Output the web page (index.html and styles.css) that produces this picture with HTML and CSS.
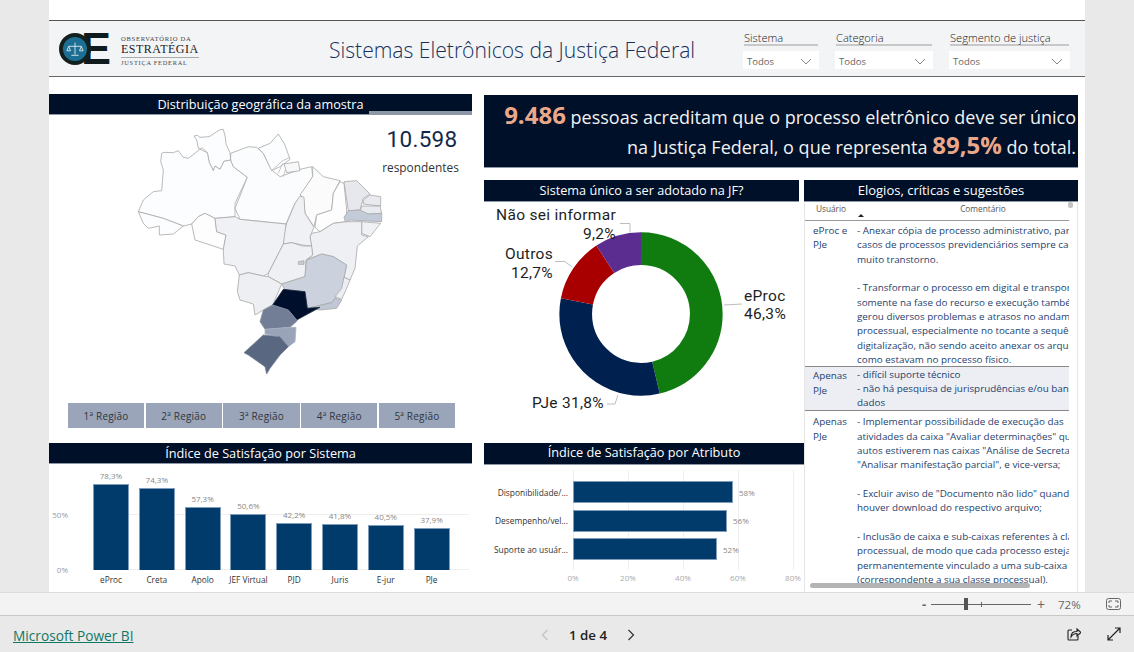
FILE: index.html
```html
<!DOCTYPE html>
<html lang="pt-BR">
<head>
<meta charset="utf-8">
<title>Sistemas Eletrônicos da Justiça Federal</title>
<link rel="stylesheet" href="styles.css">
</head>
<body>
<div class="page">
  <main class="stage">
    <div class="canvas">
      <header class="band">
        <div class="logo">
          <div class="logo-mark">
            <span class="logo-o">
              <svg class="logo-scale" viewBox="0 0 20 20"><path d="M10 3v13M6 17h8M3 7h14M3 7l-2 5h4zM17 7l-2 5h4z" fill="none" stroke="#dfeaf0" stroke-width="1"/></svg>
            </span>
            <span class="logo-e">E</span>
          </div>
          <div class="logo-text">
            <span class="logo-top">OBSERVATÓRIO DA</span>
            <span class="logo-main">ESTRATÉGIA</span>
            <span class="logo-sub">JUSTIÇA FEDERAL</span>
          </div>
        </div>
        <h1 class="report-title">Sistemas Eletrônicos da Justiça Federal</h1>
        <div class="slicers">
          <div class="slicer s1">
            <div class="slicer-label">Sistema</div>
            <div class="slicer-box"><span>Todos</span><svg class="chev" viewBox="0 0 12 7"><path d="M1 1l5 5 5-5" fill="none" stroke="#888" stroke-width="1"/></svg></div>
          </div>
          <div class="slicer s2">
            <div class="slicer-label">Categoria</div>
            <div class="slicer-box"><span>Todos</span><svg class="chev" viewBox="0 0 12 7"><path d="M1 1l5 5 5-5" fill="none" stroke="#888" stroke-width="1"/></svg></div>
          </div>
          <div class="slicer s3">
            <div class="slicer-label">Segmento de justiça</div>
            <div class="slicer-box"><span>Todos</span><svg class="chev" viewBox="0 0 12 7"><path d="M1 1l5 5 5-5" fill="none" stroke="#888" stroke-width="1"/></svg></div>
          </div>
        </div>
      </header>

      <div class="board">
        <section class="col-left">
          <h2 class="bar-title geo">Distribuição geográfica da amostra</h2>
          <div class="geo-body">
            <div class="geo-top">
              <svg class="map" viewBox="0 0 780 810">
                <g stroke="#a8a8a8" stroke-width="2.400" stroke-linejoin="round">
                  <path fill="#fcfdfe" d="M222 48L232 46L240 52L268 50L298 30L310 28L316 52L318 72L330 98L332 120L312 124L300 148L285 138L280 152L268 128L262 98L248 85L235 85L230 60Z"/>
                  <path fill="#fcfdfe" d="M125 100L132 97L160 98L175 92L190 112L205 115L240 88L262 98L268 128L280 152L285 138L300 148L312 124L332 120L340 140L382 172L345 250L345 290L285 295L255 280L235 290L215 312L190 318L130 295L55 275L70 240L100 215L125 212L130 150L122 125Z"/>
                  <path fill="#fcfdfe" d="M55 275L130 295L190 318L160 342L118 345L118 318L85 325L70 310Z"/>
                  <path fill="#fdfdfd" d="M215 312L235 290L255 280L285 295L290 335L318 345L310 388L280 378L225 360Z"/>
                  <path fill="#fbfcfd" d="M332 100L385 80L410 82L430 100L455 150L480 170L540 148L575 140L578 170L545 225L525 250L498 312L360 298L345 265L382 172L340 140L332 120Z"/>
                  <path fill="#fcfdfe" d="M415 85L450 70L475 42L495 75L510 118L480 140L455 152L430 100Z"/>
                  <path fill="#f7f8fa" d="M492 132L535 125L540 152L500 158Z"/>
                  <path fill="none" stroke="#b8b8b8" d="M455 152L488 122L510 112M475 160L488 130M490 170L496 150"/>
                  <path fill="#fbfbfc" d="M578 140L610 170L660 182L640 220L635 270L590 285L582 320L555 280L550 232L540 225L578 170Z"/>
                  <path fill="#fdfdfd" d="M660 185L672 190L680 270L680 305L640 310L600 335L585 322L590 285L635 270L640 220Z"/>
                  <path fill="#e6e8ee" d="M672 185L710 182L750 222L730 235L720 270L685 272Z"/>
                  <path fill="#e8eaef" d="M750 225L782 230L782 258L730 252L730 240Z"/>
                  <path fill="#e8ebf0" d="M725 258L780 258L785 280L745 282L720 275Z"/>
                  <path fill="#c3cbd9" d="M685 272L720 270L745 282L785 280L785 305L720 302L690 300L678 310L672 292Z"/>
                  <path fill="#f0f1f5" d="M725 305L782 310L750 350L725 340Z"/>
                  <path fill="#eff0f4" d="M575 340L600 335L640 310L680 305L725 305L725 345L745 350L712 378L705 445L690 480L672 472L680 435L640 410L605 402L560 420L578 405L570 350Z"/>
                  <path fill="#f0f1f5" d="M540 228L552 232L555 280L582 322L570 350L575 378L548 375L515 368L490 372L492 340L500 310L525 250Z"/>
                  <path fill="#f0f1f5" d="M285 295L345 290L360 298L498 312L490 372L445 460L430 468L385 458L358 465L345 438L312 432L310 388L318 345L290 335Z"/>
                  <path fill="#eff0f4" d="M490 372L515 368L548 378L575 378L578 405L558 420L555 470L485 492L445 470L445 460Z"/>
                  <path fill="#c6cdda" d="M535 425L552 422L552 433L535 433Z"/>
                  <path fill="#eeeff3" d="M358 465L385 458L430 468L445 470L485 492L458 555L430 570L405 585L400 552L360 540L352 515Z"/>
                  <path fill="#cbd1dd" d="M485 492L555 470L560 420L605 402L640 410L680 435L672 472L665 520L645 535L635 548L562 565L555 515L495 510Z"/>
                  <path fill="#eceef3" d="M672 472L690 480L680 505L665 538L645 530L665 505Z"/>
                  <path fill="#c0c8d6" d="M562 565L635 548L645 535L665 540L650 565L600 570Z"/>
                  <path fill="#000f2b" stroke="#1a2840" d="M458 555L490 508L555 515L562 565L600 562L530 600L505 570Z"/>
                  <path fill="#727e96" stroke="#8a93a6" d="M430 570L458 555L505 570L532 602L510 622L435 628L420 605Z"/>
                  <path fill="#9aa4b9" stroke="#a9b1c2" d="M435 628L510 622L528 622L525 665L505 680L480 650L435 642Z"/>
                  <path fill="#5a6780" stroke="#77829a" d="M372 698L430 645L480 650L505 680L480 705L450 745L440 762L435 740L385 705Z"/>
                </g>
              </svg>
              <div class="kpi">
                <div class="kpi-value">10.598</div>
                <div class="kpi-label">respondentes</div>
              </div>
            </div>
            <div class="regions">
              <button class="region">1ª Região</button>
              <button class="region">2ª Região</button>
              <button class="region">3ª Região</button>
              <button class="region">4ª Região</button>
              <button class="region">5ª Região</button>
            </div>
          </div>
          <h2 class="bar-title din">Índice de Satisfação por Sistema</h2>
          <div class="columns-chart">
            <div class="y-axis"><span>50%</span><span>0%</span></div>
            <div class="plot">
              <div class="col"><span class="val">78,3%</span><i class="bar" style="height:86px"></i><span class="cat">eProc</span></div>
              <div class="col"><span class="val">74,3%</span><i class="bar" style="height:82px"></i><span class="cat">Creta</span></div>
              <div class="col"><span class="val">57,3%</span><i class="bar" style="height:63px"></i><span class="cat">Apolo</span></div>
              <div class="col"><span class="val">50,6%</span><i class="bar" style="height:56px"></i><span class="cat">JEF Virtual</span></div>
              <div class="col"><span class="val">42,2%</span><i class="bar" style="height:47px"></i><span class="cat">PJD</span></div>
              <div class="col"><span class="val">41,8%</span><i class="bar" style="height:46px"></i><span class="cat">Juris</span></div>
              <div class="col"><span class="val">40,5%</span><i class="bar" style="height:45px"></i><span class="cat">E-jur</span></div>
              <div class="col"><span class="val">37,9%</span><i class="bar" style="height:42px"></i><span class="cat">PJe</span></div>
            </div>
          </div>
        </section>

        <section class="col-right">
          <div class="banner">
            <p class="banner-line"><b>9.486</b> pessoas acreditam que o processo eletrônico deve ser único</p>
            <p class="banner-line">na Justiça Federal, o que representa <b>89,5%</b> do total.</p>
          </div>
          <div class="lower">
            <div class="col-mid">
              <h2 class="bar-title din small">Sistema único a ser adotado na JF?</h2>
              <svg class="donut" viewBox="0 0 320 238">
                <g fill="none" stroke-width="32.7" transform="rotate(-90 157 112)">
                  <circle cx="157" cy="112" r="65.3" stroke="#107c10" pathLength="100" stroke-dasharray="46.3 100"/>
                  <circle cx="157" cy="112" r="65.3" stroke="#002050" pathLength="100" stroke-dasharray="31.8 100" stroke-dashoffset="-46.3"/>
                  <circle cx="157" cy="112" r="65.3" stroke="#a80000" pathLength="100" stroke-dasharray="12.7 100" stroke-dashoffset="-78.1"/>
                  <circle cx="157" cy="112" r="65.3" stroke="#5c2d91" pathLength="100" stroke-dasharray="9.2 100" stroke-dashoffset="-90.8"/>
                </g>
                <g fill="none" stroke="#bdbdbd" stroke-width="1">
                  <path d="M146 30.5v-9h-10"/>
                  <path d="M88 65l-7-5.500h-10"/>
                  <path d="M240 103l18-1"/>
                  <path d="M134 193l-3 9h-8"/>
                </g>
                <g class="donut-labels">
                  <text x="132" y="18" text-anchor="end">Não sei informar</text>
                  <text x="132" y="37" text-anchor="end">9,2%</text>
                  <text x="69" y="57" text-anchor="end">Outros</text>
                  <text x="69" y="76" text-anchor="end">12,7%</text>
                  <text x="260" y="99">eProc</text>
                  <text x="260" y="117">46,3%</text>
                  <text x="120" y="206" text-anchor="end">PJe 31,8%</text>
                </g>
              </svg>
              <h2 class="bar-title din attr">Índice de Satisfação por Atributo</h2>
              <div class="hbar-chart">
                <div class="hrow"><span class="hcat">Disponibilidade/...</span><i class="hbar" style="width:160px"></i><span class="hval">58%</span></div>
                <div class="hrow"><span class="hcat">Desempenho/vel...</span><i class="hbar" style="width:154px"></i><span class="hval">56%</span></div>
                <div class="hrow"><span class="hcat">Suporte ao usuár...</span><i class="hbar" style="width:144px"></i><span class="hval">52%</span></div>
                <div class="x-axis"><span>0%</span><span>20%</span><span>40%</span><span>60%</span><span>80%</span></div>
              </div>
            </div>
            <div class="col-table">
              <h2 class="bar-title elogios">Elogios, críticas e sugestões</h2>
              <div class="table">
                <div class="thead">
                  <div class="th user">Usuário</div>
                  <div class="th comment">Comentário<span class="sort"></span></div>
                </div>
                <div class="tr">
                  <div class="td user">eProc e PJe</div>
                  <div class="td comment">
                    <p>- Anexar cópia de processo administrativo, para</p>
                    <p>casos de processos previdenciários sempre causa</p>
                    <p>muito transtorno.</p>
                    <p>&nbsp;</p>
                    <p>- Transformar o processo em digital e transportar</p>
                    <p>somente na fase do recurso e execução também</p>
                    <p>gerou diversos problemas e atrasos no andamento</p>
                    <p>processual, especialmente no tocante a sequência</p>
                    <p>digitalização, não sendo aceito anexar os arquivos</p>
                    <p>como estavam no processo físico.</p>
                  </div>
                </div>
                <div class="tr alt">
                  <div class="td user">Apenas PJe</div>
                  <div class="td comment">
                    <p>- difícil suporte técnico</p>
                    <p>- não há pesquisa de jurisprudências e/ou banco</p>
                    <p>dados</p>
                  </div>
                </div>
                <div class="tr open">
                  <div class="td user">Apenas PJe</div>
                  <div class="td comment">
                    <p>- Implementar possibilidade de execução das</p>
                    <p>atividades da caixa "Avaliar determinações" quando</p>
                    <p>autos estiverem nas caixas "Análise de Secretaria"</p>
                    <p>"Analisar manifestação parcial", e vice-versa;</p>
                    <p>&nbsp;</p>
                    <p>- Excluir aviso de "Documento não lido" quando</p>
                    <p>houver download do respectivo arquivo;</p>
                    <p>&nbsp;</p>
                    <p>- Inclusão de caixa e sub-caixas referentes à classe</p>
                    <p>processual, de modo que cada processo esteja</p>
                    <p>permanentemente vinculado a uma sub-caixa</p>
                    <p>(correspondente a sua classe processual).</p>
                  </div>
                </div>
                <span class="scroll-h"></span>
                <span class="scroll-v"></span>
              </div>
            </div>
          </div>
        </section>
      </div>
    </div>
  </main>

  <div class="zoombar">
    <span class="zoom-minus">-</span>
    <div class="zoom-track"><span class="zoom-thumb"></span><span class="zoom-tick"></span></div>
    <span class="zoom-plus">+</span>
    <span class="zoom-pct">72%</span>
    <svg class="fit-icon" viewBox="0 0 15 12"><rect x="0.500" y="0.500" width="14" height="11" rx="2" fill="none" stroke="#666"/><path d="M3 5V3h3M12 5V3H9M3 7v2h3M12 7v2H9" fill="none" stroke="#666"/></svg>
  </div>

  <footer class="footer">
    <a class="pbi-link" href="#">Microsoft Power BI</a>
    <nav class="pager">
      <svg class="pg-chev" viewBox="0 0 8 12"><path d="M6.500 1l-5 5 5 5" fill="none" stroke="#c2c2c2" stroke-width="1.200"/></svg>
      <span class="pg-text">1 de 4</span>
      <svg class="pg-chev" viewBox="0 0 8 12"><path d="M1.500 1l5 5-5 5" fill="none" stroke="#333" stroke-width="1.200"/></svg>
    </nav>
    <div class="foot-icons">
      <svg class="foot-icon" viewBox="0 0 14 14"><path d="M5 3H2a1 1 0 0 0-1 1v8a1 1 0 0 0 1 1h8a1 1 0 0 0 1-1V9" fill="none" stroke="#222" stroke-width="1.100"/><path d="M4 10c0-4 2-5.500 6-5.500V2l4 3.500L10 9V6.500C7 6.500 5.500 7.500 4 10z" fill="none" stroke="#222" stroke-width="1.100"/></svg>
      <svg class="foot-icon" viewBox="0 0 14 14"><path d="M1 13L13 1M8 1h5v5M1 8v5h5" fill="none" stroke="#222" stroke-width="1.200"/></svg>
    </div>
  </footer>
</div>
</body>
</html>
```
FILE: styles.css
```css
* { box-sizing: border-box; }
html, body { margin: 0; padding: 0; height: 100%; overflow: hidden; }
body { font-family: "Open Sans", "Liberation Sans", sans-serif; color: #222; background: #e9e9e9; }
h1, h2, p { margin: 0; font-weight: 400; }
.page { width: 1134px; height: 652px; display: flex; flex-direction: column; }
.stage { height: 592px; padding-left: 49px; background: #e9e9e9; }
.canvas { width: 1036px; height: 592px; background: #fff; padding-top: 20px; overflow: hidden; }

/* header band */
.band { height: 57px; background: #f3f4f6; border-top: 1px solid #555; border-bottom: 1px solid #666; display: flex; align-items: center; padding: 0 15px 0 10px; }
.logo { display: flex; align-items: center; width: 140px; gap: 11px; flex: none; padding-top: 1px; }
.logo-mark { display: flex; align-items: center; width: 51px; height: 32px; flex: none; }
.logo-o { width: 32px; height: 32px; border-radius: 50%; background: #1c6f92; border: 4px solid #12201f; display: flex; align-items: center; justify-content: center; flex: none; position: relative; z-index: 1; }
.logo-scale { width: 18px; height: 18px; }
.logo-e { font-family: "Liberation Sans", sans-serif; font-weight: 700; font-size: 45px; line-height: 32px; color: #0f1a1c; margin-left: -10px; }
.logo-text { display: flex; flex-direction: column; align-items: stretch; width: 78px; font-family: "Liberation Serif", serif; color: #444; white-space: nowrap; padding-top: 3px; }
.logo-top { font-size: 6.600px; letter-spacing: 0.7px; line-height: 9px; }
.logo-main { font-size: 12px; letter-spacing: 0.5px; line-height: 13px; border-bottom: 1px solid #aaa; padding-bottom: 1px; color: #222; }
.logo-sub { font-size: 6.300px; letter-spacing: 0.8px; line-height: 10px; }
.report-title { margin-left: 130px; font-size: 21.100px; font-weight: 300; color: #16305a; white-space: nowrap; line-height: 30px; padding-top: 3px; }
.slicers { margin-left: auto; display: flex; gap: 16px; padding-top: 2px; }
.slicer { display: flex; flex-direction: column; }
.s1 { width: 76px; } .s2 { width: 98px; } .s3 { width: 121px; }
.slicer-label { font-size: 11.100px; font-weight: 300; color: #222; line-height: 16px; margin: 0 1px; border-bottom: 2px solid #c8c8c8; height: 16px; white-space: nowrap; }
.slicer-box { margin-top: 5px; height: 18px; background: #fff; display: flex; align-items: center; justify-content: space-between; padding: 2px 7px 0 4px; font-size: 9.500px; color: #666; }
.chev { width: 12px; height: 7px; }

/* board */
.board { display: flex; gap: 12px; padding-top: 17px; }
.col-left { width: 423px; flex: none; }
.col-right { width: 594px; flex: none; padding-top: 1px; }
.bar-title { height: 21px; background: #001029; color: #fff; font-size: 12.700px; line-height: 20px; text-align: center; white-space: nowrap; border-bottom: 1px solid #8e97a8; }
.bar-title.geo { background-image: linear-gradient(#8e97a8, #8e97a8); background-repeat: no-repeat; background-size: 103px 3px; background-position: right bottom; }
.bar-title.din { font-size: 12.700px; }
.bar-title.small { height: 22px; margin-right: 5px; }
.bar-title.attr { margin-top: 3px; height: 22px; line-height: 19px; }
.bar-title.elogios { height: 22px; font-size: 13px; line-height: 21px; }

.geo-body { height: 328px; display: flex; flex-direction: column; }
.geo-top { display: flex; padding: 5px 0 0 71px; height: 275px; }
.map { width: 260px; height: 270px; flex: none; overflow: visible; }
.kpi { width: 81px; text-align: center; position: relative; z-index: 1; }
.kpi-value { font-family: "Roboto", sans-serif; font-size: 22.500px; line-height: 28px; letter-spacing: 0.3px; color: #14294a; padding-top: 5px; padding-left: 3px; }
.kpi-label { font-size: 11.900px; line-height: 16px; color: #333; margin-top: 6px; white-space: nowrap; }
.regions { display: flex; gap: 1.500px; margin: 13px 0 0 19px; width: 387px; }
.region { flex: 1; height: 25px; padding: 0; border: 0; background: #9aa5b9; color: #2f3540; font: 10px "Open Sans", sans-serif; letter-spacing: 0.2px; }

/* columns chart */
.columns-chart { height: 128px; display: flex; }
.y-axis { width: 44px; flex: none; display: flex; flex-direction: column; padding-top: 46px; align-items: flex-end; padding-right: 25px; font-size: 8px; color: #999; gap: 45px; line-height: 10px; white-space: nowrap; }
.plot { width: 376px; height: 106px; display: flex; gap: 9.800px; align-items: flex-end; background-image: linear-gradient(#eee, #eee), linear-gradient(#eee, #eee); background-size: 100% 1px; background-repeat: no-repeat; background-position: 0 50px, 0 105px; }
.col { width: 36px; flex: none; display: flex; flex-direction: column; align-items: center; position: relative; }
.val { font-size: 8px; line-height: 10px; color: #888; margin-bottom: 3px; white-space: nowrap; }
.bar { display: block; width: 36px; background: #003b6c; border: 1px solid #7f9cbb; border-bottom: 0; }
.cat { position: absolute; top: 100%; margin-top: 4px; font-size: 8.300px; line-height: 11px; color: #333; white-space: nowrap; }

/* banner */
.banner { height: 73px; background: #001029; border-bottom: 1px solid #8e97a8; margin-bottom: 12px; padding: 5px 2px 0 0; text-align: right; color: #f2f2f2; font-size: 18px; white-space: nowrap; }
.banner-line { height: 30px; line-height: 30px; }
.banner b { font-size: 24px; font-weight: 700; color: #eaa88b; }

.lower { display: flex; }
.col-mid { width: 320px; flex: none; }
.donut { display: block; width: 320px; height: 238px; }
.donut-labels text { font-family: "Roboto", sans-serif; font-size: 15.500px; fill: #1e1e1e; letter-spacing: 0.3px; }

/* bar chart */
.hbar-chart { height: 127px; padding-top: 16px; background-image: linear-gradient(#eee, #eee), linear-gradient(#eee, #eee), linear-gradient(#eee, #eee), linear-gradient(#eee, #eee), linear-gradient(#eee, #eee); background-repeat: no-repeat; background-size: 1px 100px; background-position: 89px 5px, 144px 5px, 199px 5px, 254px 5px, 309px 5px; }
.hrow { display: flex; align-items: center; height: 22px; margin-bottom: 6.500px; }
.hcat { width: 84px; margin-right: 5px; text-align: right; font-size: 8.400px; color: #333; white-space: nowrap; flex: none; }
.hbar { display: block; height: 22px; background: #003b6c; border: 1px solid #7f9cbb; }
.hval { margin-left: 6px; font-size: 8px; color: #888; }
.x-axis { display: flex; padding-left: 61.500px; margin-top: 12px; font-size: 8px; color: #aaa; line-height: 11px; }
.x-axis span { width: 55px; flex: none; text-align: center; }

/* table */
.col-table { width: 274px; flex: none; }
.table { position: relative; height: 390px; overflow: hidden; border-left: 1px solid #e5e5e5; border-right: 1px solid #e5e5e5; padding-right: 8px; color: #1f3f6e; font-size: 9.850px; }
.thead { display: flex; height: 19px; border-bottom: 1px solid #999; color: #555; font-size: 8.300px; line-height: 14px; }
.th { text-align: center; position: relative; }
.user { width: 52px; flex: none; }
.comment { flex: 1; min-width: 0; overflow: hidden; }
.th.comment { overflow: visible; padding-left: 40px; }
.sort { position: absolute; left: 1px; top: 12px; width: 0; height: 0; border: 3px solid transparent; border-top: 0; border-bottom: 3px solid #222; }
.tr { display: flex; border-bottom: 1px solid #888; padding-top: 2px; }
.tr p { white-space: nowrap; line-height: 14.350px; height: 14.350px; }
.td.user { padding-left: 8px; padding-right: 6px; line-height: 14.350px; }
.tr.alt { background: #eceef3; padding-top: 1px; }
.tr.alt p { line-height: 13.800px; height: 13.800px; }
.tr.open { border-bottom: 0; padding-top: 3.500px; }
.scroll-h { position: absolute; left: 5px; bottom: 4px; width: 220px; height: 5px; border-radius: 2.500px; background: #b4b4b4; }
.scroll-v { position: absolute; right: 4px; top: 0; width: 5px; height: 6px; border-radius: 2px; background: #c4c4c4; }

/* zoom bar */
.zoombar { height: 24px; background: #f3f3f3; border-top: 1px solid #dcdcdc; border-bottom: 1px solid #c8c8c8; display: flex; align-items: center; padding-left: 922px; color: #666; }
.zoom-minus { width: 9px; font-size: 13px; font-weight: 700; line-height: 16px; }
.zoom-track { width: 100px; height: 1px; background: #666; position: relative; }
.zoom-thumb { position: absolute; left: 33px; top: -6px; width: 4px; height: 12px; background: #555; }
.zoom-tick { position: absolute; left: 50px; top: -2px; width: 1px; height: 5px; background: #666; }
.zoom-plus { margin-left: 6px; font-size: 14px; width: 21px; }
.zoom-pct { font-size: 11.500px; width: 48px; }
.fit-icon { width: 15px; height: 12px; }

/* footer */
.footer { flex: 1; background: #e9e9e9; display: flex; align-items: center; padding: 2px 13px 0; }
.pbi-link { font-size: 13.700px; color: #117865; text-decoration: underline; width: 528px; white-space: nowrap; }
.pager { display: flex; align-items: center; gap: 20px; }
.pg-chev { width: 8px; height: 12px; }
.pg-text { font-size: 13.300px; font-weight: 600; color: #222; }
.foot-icons { margin-left: auto; display: flex; gap: 26px; margin-top: -3px; }
.foot-icon { width: 14px; height: 14px; }
```
